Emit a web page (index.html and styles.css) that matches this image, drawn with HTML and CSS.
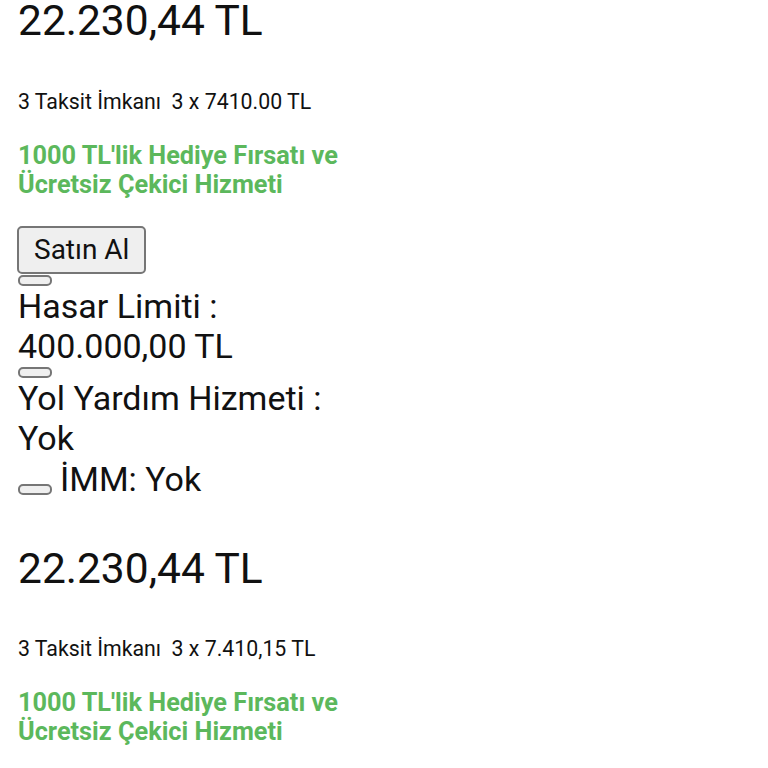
FILE: index.html
```html
<html>
    <head>
        <title>Kasko Teklifleri</title>
        <meta name="viewport" content="width=device-width" />
        <link rel="stylesheet" href="styles.css">
    </head>
    <body>
        <div class="offers">
            <div class="offer">
                <div class="price">22.230,44 TL</div>
                <div class="installment">3 Taksit İmkanı &nbsp;3 x 7410.00 TL</div>
                <div class="gift">1000 TL'lik Hediye Fırsatı ve Ücretsiz Çekici Hizmeti</div>
                <button class="buy">Satın Al</button>
                <div class="feature"><span class="pill"></span><span class="feature-text">Hasar Limiti : 400.000,00 TL</span></div>
                <div class="feature"><span class="pill"></span><span class="feature-text">Yol Yardım Hizmeti : Yok</span></div>
                <div class="feature"><span class="pill"></span><span class="feature-text">İMM: Yok</span></div>
            </div>

            <div class="offer">
                <div class="price">22.230,44 TL</div>
                <div class="installment">3 Taksit İmkanı &nbsp;3 x 7.410,15 TL</div>
                <div class="gift">1000 TL'lik Hediye Fırsatı ve Ücretsiz Çekici Hizmeti</div>
                <button class="buy">Satın Al</button>
                <div class="feature"><span class="pill"></span><span class="feature-text">Hasar Limiti : 400.000,00 TL</span></div>
                <div class="feature"><span class="pill"></span><span class="feature-text">Yol Yardım Hizmeti : Yok</span></div>
                <div class="feature"><span class="pill"></span><span class="feature-text">İMM: Yok</span></div>
            </div>
        </div>
    </body>
</html>
```

FILE: styles.css
```css
body {
    margin: 0;
    padding: 0 18px;
    color: #111;
    background: #fff;
    font-family: Roboto, "Noto Sans", sans-serif;
}

.offers {
    width: 350px;
}

.offer {
    margin-bottom: 49px;
}

.price {
    font-size: 42.5px;
    line-height: 1;
    margin: 0 0 46px;
}

.installment {
    font-size: 21.3px;
    margin: 0 0 27px;
}

.gift {
    font-size: 25.3px;
    line-height: 29px;
    font-weight: 700;
    color: #5cb85c;
    margin: 0 0 27px;
}

.buy {
    display: block;
    font-family: Roboto, "Noto Sans", sans-serif;
    font-size: 28px;
    color: #111;
    background: #efefef;
    border: 2px solid #767676;
    border-radius: 5px;
    padding: 5px 15px 6px;
    margin: 0 0 0 -1px;
}

.feature {
    font-size: 0;
    margin-top: 1px;
}

.pill {
    display: inline-block;
    box-sizing: border-box;
    width: 34px;
    height: 11px;
    margin-right: 8px;
    vertical-align: -4px;
    background: #efefef;
    border: 2px solid #767676;
    border-radius: 5px;
}

.feature-text {
    display: inline-block;
    font-size: 34px;
    line-height: 40px;
}
```
